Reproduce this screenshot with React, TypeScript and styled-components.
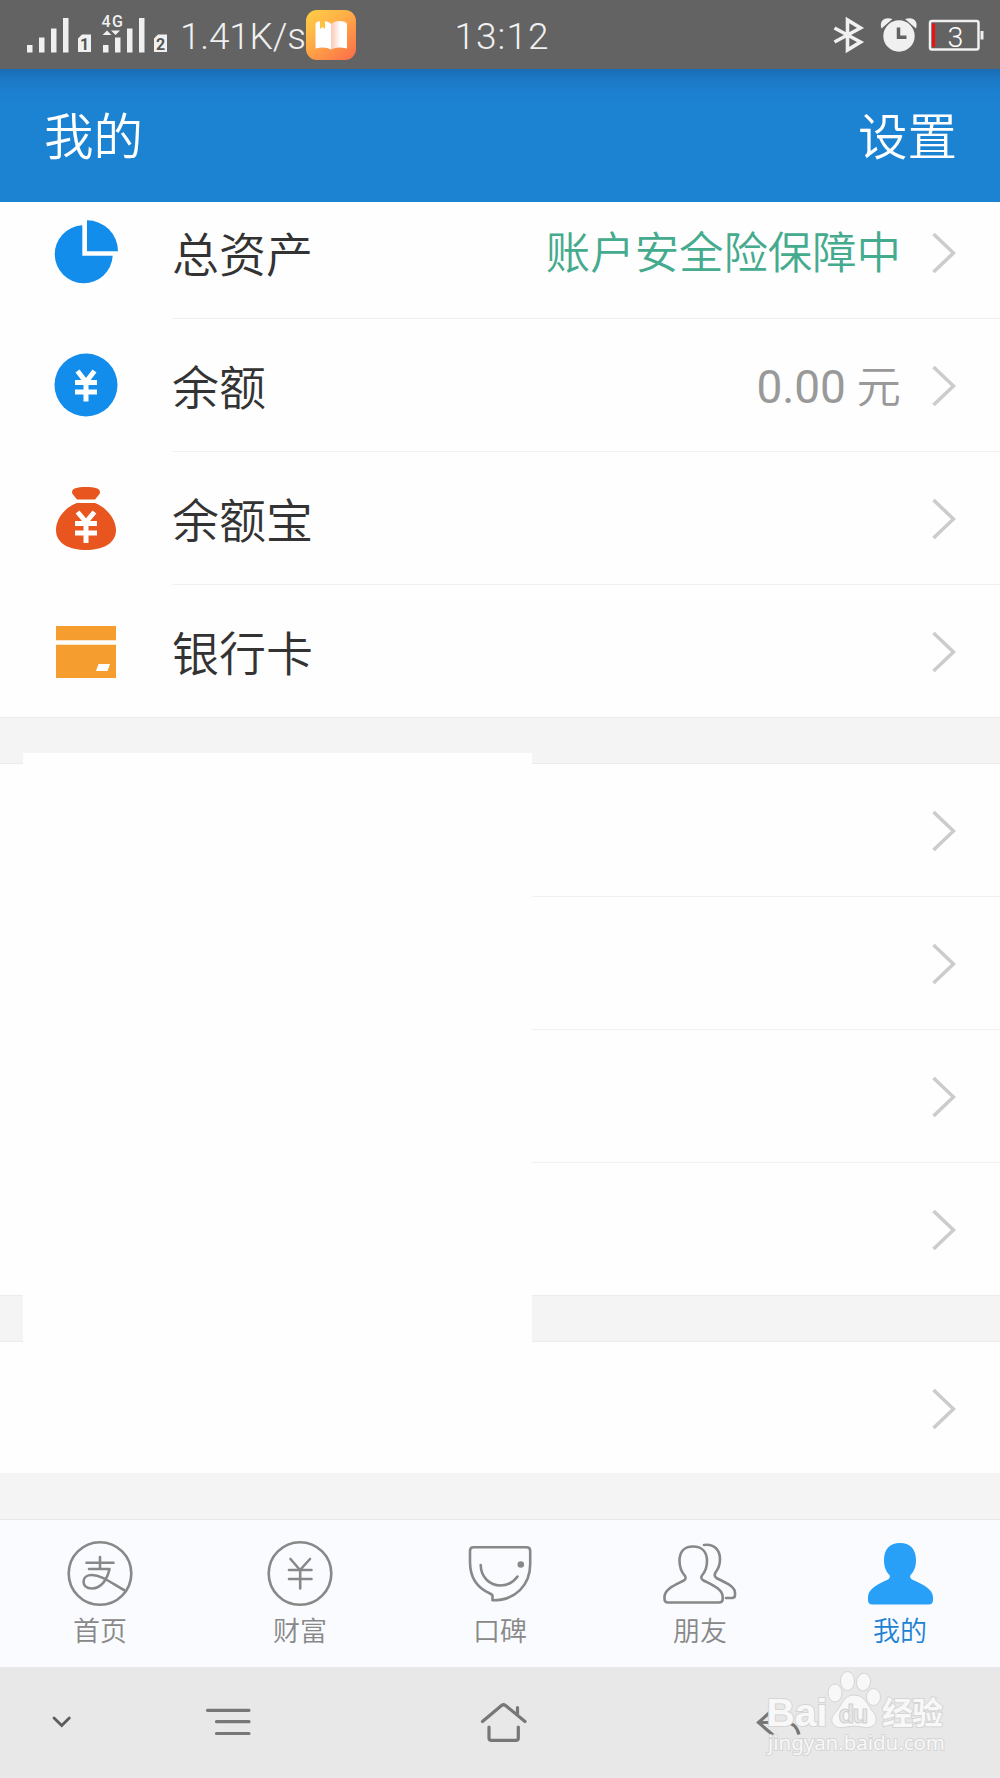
import React from 'react';
import styled, { createGlobalStyle } from 'styled-components';

const Global = createGlobalStyle`
  *, *::before, *::after { box-sizing: border-box; }
  body { margin: 0; background: #fefefe; }
`;

const Screen = styled.main`
  width: 1000px;
  height: 1778px;
  display: flex;
  flex-direction: column;
  overflow: hidden;
  background: #fefefe;
  font-family: Roboto, 'Noto Sans CJK SC DemiLight', 'Noto Sans CJK SC', sans-serif;
  font-weight: 350;
`;

const StatusBar = styled.div`
  height: 69px;
  flex: none;
  display: grid;
  grid-template-columns: 1fr auto 1fr;
  align-items: center;
  padding: 0 16px 0 26px;
  background: #636363;
  color: #f0f0f0;
`;

const StatusGroup = styled.div<{ $end?: boolean }>`
  display: flex;
  align-items: center;
  justify-content: ${p => (p.$end ? 'flex-end' : 'flex-start')};
`;

const StatusText = styled.span<{ $spacing: number; $shift?: number }>`
  font-size: 37px;
  line-height: 44px;
  letter-spacing: ${p => p.$spacing}px;
  margin-right: ${p => p.$shift ?? 0}px;
  white-space: nowrap;
  padding-top: 5px;
`;

const Header = styled.header`
  height: 133px;
  flex: none;
  display: flex;
  align-items: center;
  justify-content: space-between;
  padding: 5px 43px 0 44px;
  background: linear-gradient(#1a6db2 0, #1b78c5 10px, #1c80d0 24px, #1c82d2 36px);
  color: #fff;
  font-size: 49.5px;
  line-height: 60px;
`;

const Content = styled.div`
  flex: 1;
  position: relative;
  display: flex;
  flex-direction: column;
  gap: 46px;
  background: #f4f4f4;
  overflow: hidden;
`;

const Group = styled.section<{ $height: number; $top?: boolean }>`
  height: ${p => p.$height}px;
  flex: none;
  display: flex;
  flex-direction: column;
  justify-content: ${p => (p.$top ? 'flex-start' : 'flex-end')};
  overflow: hidden;
  background: #fefefe;
  box-shadow: 0 -1px 0 #ececec;
`;

const Row = styled.div`
  height: 133px;
  flex: none;
  display: grid;
  grid-template-columns: 172px 1fr;

  &:last-child > div { border-bottom-color: #ececec; }
`;

const RowIcon = styled.div`
  display: flex;
  align-items: center;
  padding-left: 53px;
  border-bottom: 1px solid transparent;
`;

const RowBody = styled.div`
  display: flex;
  align-items: center;
  padding-right: 44px;
  border-bottom: 1px solid #f1f1f1;

  svg { margin-top: 2px; }
`;

const Label = styled.span`
  flex: 1;
  font-size: 47px;
  line-height: 60px;
  padding-top: 8px;
  color: #333;
`;

const Value = styled.span<{ $color: string }>`
  font-size: 44.4px;
  line-height: 60px;
  padding-top: 4px;
  margin-right: 31px;
  color: ${p => p.$color};
`;

const Amount = styled.span`
  font-size: 46px;
  font-weight: 400;
  letter-spacing: -0.1px;
`;

const Mask = styled.div`
  position: absolute;
  left: 23px;
  top: 551px;
  width: 508.500px;
  height: 594px;
  background: #fefefe;
`;

const TabBar = styled.nav`
  height: 148px;
  flex: none;
  display: grid;
  grid-template-columns: repeat(5, 1fr);
  border-top: 1px solid #e8e8e8;
  background: #fafbff;
`;

const Tab = styled.div<{ $active?: boolean }>`
  display: flex;
  flex-direction: column;
  align-items: center;
  padding-top: 15px;
  font-size: 27px;
  line-height: 36px;
  color: ${p => (p.$active ? '#1c82d2' : '#888')};
  svg { margin-bottom: 3px; }
`;

const NavBar = styled.div`
  height: 111px;
  flex: none;
  position: relative;
  display: flex;
  align-items: center;
  padding: 0 197px 0 50px;
  background: #e8e8e8;
  svg { flex: none; }
`;

const Spacer = styled.i<{ $w: number }>`
  width: ${p => p.$w}px;
  flex: none;
`;

const Watermark = styled.div`
  position: absolute;
  left: 760px;
  top: 0;
`;

const Chevron = () => (
  <svg width="24" height="42" viewBox="0 0 24 42" fill="none" stroke="#ccc" strokeWidth="3.6">
    <path d="M1.5 2 21.5 21 1.5 40" />
  </svg>
);

const Pie = () => (
  <svg width="66" height="66" viewBox="0 0 66 66" fill="#128dec">
    <path d="M29.300 6.300A29 29 0 1 0 59.700 36.700H29.300Z" />
    <path d="M34 1.300V32.200H65A31 31 0 0 0 34 1.300Z" />
  </svg>
);

const Coin = () => (
  <svg width="66" height="66" viewBox="0 0 66 66">
    <circle cx="33" cy="33" r="31.500" fill="#128dec" />
    <path d="M24.500 19 33 30 41.500 19M22 30.500H44M22 40H44M33 29V49.500" fill="none" stroke="#fff" strokeWidth="5" />
  </svg>
);

const Bag = () => (
  <svg width="66" height="66" viewBox="0 -1 66 66">
    <path d="M24 13.500 19.500 8C17.500 3 22 1 33 1S48.500 3 46.500 8L42 13.500ZM24 17H42C53 21 63 33 63 44 63 58 49 64 33 64S3 58 3 44C3 33 12 21 24 17Z" fill="#e8551f" />
    <path d="M24.500 26 33 36 41.500 26M22 37.500H44M22 47H44M33 36V57" fill="none" stroke="#fff" strokeWidth="5" />
  </svg>
);

const Card = () => (
  <svg width="66" height="66" viewBox="0 -1 66 66">
    <path d="M3 7H63V21.300H3ZM3 25.700H63V59H3Z" fill="#f59d2f" />
    <path d="M45.500 45H57L54.500 52H43Z" fill="#fff" />
  </svg>
);

const Signal = () => (
  <svg width="142" height="54" viewBox="26 6.500 142 54" fill="#f0f0f0">
    <path d="M27 43.500h5.500V51H27ZM39 36h5.500V51H39ZM51 27h5.500V51H51ZM63 16.500h5.500V51H63ZM103 43.500h5.500V51H103ZM115 36h5.500V51H115ZM127 27h5.500V51H127ZM139 16.500h5.500V51H139Z" />
    <path d="m102.500 33.500 4.500-4.500 4.500 4.500ZM111 29l4.500 4.500 4.500-4.500Z" />
    <path d="M82 33H91V50.500H78V37ZM158 33h9V50.500H154V37Z" />
    <text x="84.500" y="48" textAnchor="middle" fontFamily="Roboto" fontSize="16" fontWeight="700" fill="#555">1</text>
    <text x="160.500" y="48" textAnchor="middle" fontFamily="Roboto" fontSize="16" fontWeight="700" fill="#555">2</text>
    <text x="101.500" y="25.500" fontFamily="Roboto" fontSize="16" fontWeight="500" textLength="21.500">4G</text>
  </svg>
);

const BookApp = () => (
  <svg width="50" height="50" viewBox="0 0 50 50">
    <defs>
      <linearGradient id="bk" x1="0" y1="0" x2=".8" y2="1">
        <stop offset="0" stopColor="#ffcf45" />
        <stop offset=".4" stopColor="#ffb347" />
        <stop offset="1" stopColor="#fb7548" />
      </linearGradient>
      <linearGradient id="pg" x1="0" x2="1">
        <stop offset="0" stopColor="#fbc9b5" />
        <stop offset=".6" stopColor="#fff" />
      </linearGradient>
    </defs>
    <rect width="50" height="50" rx="11" fill="url(#bk)" />
    <path d="M9.500 14Q10 11 16 11 23 11 25 14V39.500Q19 36 9.500 38.500Z" fill="#fff" />
    <path d="M25 14Q28 11 33 11 40 11 41 14V38.500Q31 36 25 39.500Z" fill="url(#pg)" />
    <path d="M14 11H19V19L16.500 17 14 19Z" fill="#ffc23d" />
  </svg>
);

const StatusIcons = () => (
  <svg width="154" height="42" viewBox="830 13.500 154 42" fill="none">
    <path d="M834.500 27.500 860.500 41.500 847.500 49.500V19.500L860.500 27.500 834.500 41.500" stroke="#f0f0f0" strokeWidth="3.600" />
    <ellipse cx="899" cy="35.500" rx="15.700" ry="15.700" fill="#f0f0f0" />
    <path d="M881.500 28C879 21 884 15.500 892.500 18.500ZM916 28C918.500 21 913.500 15.500 905 18.500Z" fill="#f0f0f0" />
    <path d="M898.500 27V36.700H906.500" stroke="#636363" strokeWidth="3.500" />
    <rect x="930" y="20.500" width="48.500" height="28.500" rx="2" stroke="#f0f0f0" strokeWidth="2.500" />
    <path d="M932 23H935V46.500H932Z" fill="#f01010" />
    <path d="M980.500 30.500H983.500V39H980.500Z" fill="#f0f0f0" />
    <text x="955.500" y="46.300" textAnchor="middle" fontFamily="Roboto" fontSize="28.500" fontWeight="300" fill="#fff">3</text>
  </svg>
);

const line = { fill: 'none', stroke: '#888', strokeWidth: 2.6, strokeLinecap: 'round', strokeLinejoin: 'round' } as const;

const HomeTab = () => (
  <svg width="76" height="76" viewBox="62 1535 76 76" {...line}>
    <circle cx="100" cy="1573.500" r="31.300" />
    <path d="M100 1557V1568.500M86.500 1562.700H113.500M89 1569H109.500C107 1580 101 1588.500 92 1588.500 86 1588.500 83.500 1585 83.500 1581.500 83.500 1577.500 87 1575 92 1575 101 1575 110 1582 124 1590" />
  </svg>
);

const WealthTab = () => (
  <svg width="76" height="76" viewBox="262 1535 76 76" {...line}>
    <circle cx="300" cy="1573.500" r="31.300" />
    <path d="M290.500 1559 300 1570 310 1559M289 1570H311.500M289 1579H311.500M300.200 1570V1588.500" />
  </svg>
);

const KoubeiTab = () => (
  <svg width="76" height="76" viewBox="462.500 1535 76 76" {...line}>
    <path d="M474 1547.300H527Q530.700 1547.300 530.700 1551V1564C530.700 1585 516 1600.500 493 1600.300V1596Q493 1594.500 490.500 1593.500C478 1588 470.500 1577 470.500 1562V1551Q470.500 1547.300 474 1547.300Z" />
    <path d="M481.200 1565C481.500 1577 490 1585.500 501 1585.500 508.500 1585.500 514 1582 518 1576.500" />
    <circle cx="521.300" cy="1564.500" r="2" fill="#888" />
  </svg>
);

const FriendsTab = () => (
  <svg width="76" height="76" viewBox="662 1535 76 76" {...line}>
    <path d="M693 1546.500C684 1546.500 679.500 1552 679.500 1561 679.500 1568 681.500 1572 685 1576Q687 1579 683 1581C675 1585 664.500 1589 664.500 1597V1599Q664.500 1602.500 668 1602.500H719Q722.700 1602.500 722.700 1599V1597C722.700 1589 712 1585 703.500 1580.500Q700 1578.500 702 1575.500C705.500 1571.500 707 1568 707 1561 707 1552 702 1546.500 693 1546.500Z" />
    <path d="M704 1545C714 1543.500 720 1550 720 1559 720 1565 719 1568 715.500 1572.500Q713.500 1576 716.500 1578C725 1582.500 735 1586 735 1593V1595Q735 1598 732 1598H726" />
  </svg>
);

const MineTab = () => (
  <svg width="76" height="76" viewBox="862 1535 76 76" fill="#29a0f7">
    <path d="M900 1543C889 1543 884 1550 884 1560 884 1567 886 1571.500 889.500 1575Q891 1578 887 1580C878 1584 868 1589 868 1597V1600Q868 1604.500 872.500 1604.500H928.500Q933 1604.500 933 1600V1597C933 1589 922 1584 913 1580Q909 1578 910.500 1575C914 1571.500 916 1567 916 1560 916 1550 911 1543 900 1543Z" />
  </svg>
);

const Paw = () => (
  <svg width="190" height="100" viewBox="760 1667 190 100" fill="#f8f8f8" stroke="#d5d5d5" strokeWidth="1">
    <g fontFamily="'Liberation Sans'" fontWeight="700" paintOrder="stroke" strokeWidth="2">
      <text x="766.500" y="1726" fontSize="38" textLength="61" lengthAdjust="spacingAndGlyphs">Bai</text>
      <text x="882" y="1724" fontFamily="'Noto Sans CJK SC'" fontSize="31" textLength="61">经验</text>
    </g>
    <ellipse cx="835" cy="1693" rx="7" ry="9" />
    <ellipse cx="847.500" cy="1681" rx="7" ry="9.500" />
    <ellipse cx="863.500" cy="1682" rx="7" ry="9" transform="rotate(10 863.500 1682)" />
    <ellipse cx="873.500" cy="1697" rx="7" ry="8.500" />
    <path d="M854 1695C866 1695 867 1706 874 1713 880 1722 873 1730 862 1727Q854 1725 846 1727C833 1730 828 1721 835 1713 842 1706 843 1695 854 1695Z" />
    <text x="838.500" y="1722.500" fontFamily="'Liberation Sans'" fontSize="26" fontWeight="700" fill="#e8e8e8" stroke="#d0d0d0" textLength="30">du</text>
    <text x="768" y="1750" fontFamily="'Noto Sans'" fontSize="20.500" fontWeight="400" paintOrder="stroke" strokeWidth="2" textLength="177">jingyan.baidu.com</text>
  </svg>
);

const assets = [
  { label: '总资产', icon: <Pie />, value: '账户安全险保障中', color: '#45ab8e' },
  { label: '余额', icon: <Coin />, value: <><Amount>0.00</Amount> 元</>, color: '#999' },
  { label: '余额宝', icon: <Bag /> },
  { label: '银行卡', icon: <Card /> },
];

const tabs = [
  { label: '首页', icon: <HomeTab /> },
  { label: '财富', icon: <WealthTab /> },
  { label: '口碑', icon: <KoubeiTab /> },
  { label: '朋友', icon: <FriendsTab /> },
  { label: '我的', icon: <MineTab />, active: true },
];

const EmptyRow = () => (
  <Row>
    <RowIcon />
    <RowBody>
      <Label />
      <Chevron />
    </RowBody>
  </Row>
);

export default function App() {
  return (
    <Screen>
      <Global />
      <StatusBar>
        <StatusGroup>
          <Signal />
          <Spacer $w={12} />
          <StatusText $spacing={-0.2}>1.41K/s</StatusText>
          <BookApp />
        </StatusGroup>
        <StatusText $spacing={1} $shift={6}>13:12</StatusText>
        <StatusGroup $end>
          <StatusIcons />
        </StatusGroup>
      </StatusBar>
      <Header>
        <span>我的</span>
        <span>设置</span>
      </Header>
      <Content>
        <Group $height={516}>
          {assets.map(a => (
            <Row key={a.label}>
              <RowIcon>{a.icon}</RowIcon>
              <RowBody>
                <Label>{a.label}</Label>
                {a.value && <Value $color={a.color}>{a.value}</Value>}
                <Chevron />
              </RowBody>
            </Row>
          ))}
        </Group>
        <Group $height={532}>
          <EmptyRow />
          <EmptyRow />
          <EmptyRow />
          <EmptyRow />
        </Group>
        <Group $height={131} $top>
          <EmptyRow />
        </Group>
        <Mask />
      </Content>
      <TabBar>
        {tabs.map(t => (
          <Tab key={t.label} $active={t.active}>
            {t.icon}
            {t.label}
          </Tab>
        ))}
      </TabBar>
      <NavBar>
        <svg width="24" height="20" viewBox="50 1713 24 20" fill="none" stroke="#5c5c5c" strokeWidth="2.800" strokeLinecap="round">
          <path d="M54 1718 61.700 1725.500 69.300 1718" />
        </svg>
        <Spacer $w={130} />
        <svg width="50" height="36" viewBox="204 1705 50 36" fill="none" stroke="#777" strokeWidth="3.200" strokeLinecap="round">
          <path d="M207.500 1710.300H249M216.500 1721.700H249M216.500 1733.500H249" />
        </svg>
        <Spacer $w={224} />
        <svg width="50" height="46" viewBox="478 1700 50 46" fill="none" stroke="#777" strokeWidth="3.200" strokeLinecap="round" strokeLinejoin="round">
          <path d="M482.500 1721.500 501.500 1705.500Q503.500 1704 505.500 1705.500L525 1721.500M517.500 1707.500V1715M489 1727V1738Q489 1740.300 491.500 1740.300H516Q518.300 1740.300 518.300 1738V1727" />
        </svg>
        <Spacer $w={226} />
        <svg width="50" height="30" viewBox="754 1707.500 50 30" fill="none" stroke="#777" strokeWidth="3.200">
          <path d="M773 1709 758.500 1722 773 1734.500M759 1722H785C792 1722 797 1726 799 1734" />
        </svg>
        <Watermark>
          <Paw />
        </Watermark>
      </NavBar>
    </Screen>
  );
}
